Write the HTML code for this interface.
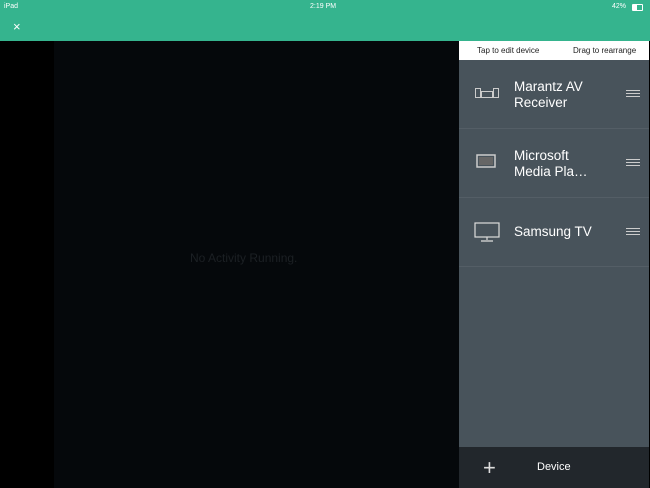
<!DOCTYPE html>
<html><head><style>
body{margin:0;width:650px;height:488px;overflow:hidden;background:#000;font-family:"Liberation Sans",sans-serif;position:relative}
.top{position:absolute;left:0;top:0;width:650px;height:41px;background:#35b48e;color:#fff}
.sb{position:absolute;top:3px;font-size:7px}
.main{position:absolute;left:54px;top:41px;width:405px;height:447px;background:#05080b}
.na{position:absolute;font-size:12px;color:#1c2024}
.panel{position:absolute;left:459px;top:41px;width:190px;height:447px;background:#48535b}
.hdr{height:19px;background:#fff;font-size:8px;color:#222;position:relative}
.row{height:68px;border-bottom:1px solid #545e66;position:relative;color:#fff;font-size:13.5px}
.row .t{position:absolute;left:55px;line-height:16px}
.ham{position:absolute;left:167px;width:14px;height:5px;border-top:1px solid #ccc;border-bottom:1px solid #ccc}
.ham:after{content:"";position:absolute;left:0;right:0;top:2px;border-top:1px solid #ccc}
.foot{position:absolute;left:0;bottom:0;width:190px;height:41px;background:#22272c;color:#fff;font-size:11px}
</style></head><body>
<div class="top">
<div class="sb" style="left:4px">iPad</div>
<div class="sb" style="left:310px">2:19 PM</div>
<div class="sb" style="left:612px">42%</div>
<div style="position:absolute;left:632px;top:4px;width:9px;height:5px;border:1px solid #fff;border-radius:1px"><div style="width:4px;height:5px;background:#fff"></div></div>
<div style="position:absolute;left:13px;top:19px;font-size:13px">×</div>
</div>
<div class="main"><div class="na" style="left:136px;top:210px">No Activity Running.</div></div>
<div class="panel">
<div class="hdr"><span style="position:absolute;left:18px;top:5px">Tap to edit device</span><span style="position:absolute;left:114px;top:5px">Drag to rearrange</span></div>
<div class="row">
<svg style="position:absolute;left:16px;top:27px" width="24" height="12" viewBox="0 0 24 12" fill="none" stroke="#ccc" stroke-width="1"><rect x="0.5" y="1.5" width="5" height="9"/><rect x="6.5" y="4.5" width="11" height="6"/><rect x="18.5" y="1.5" width="5" height="9"/></svg>
<div class="t" style="top:19px">Marantz AV<br>Receiver</div><div class="ham" style="top:30px"></div></div>
<div class="row">
<svg style="position:absolute;left:17px;top:25px" width="20" height="14" viewBox="0 0 20 14"><rect x="1" y="1" width="18" height="12" fill="none" stroke="#ccc" stroke-width="1.5"/><rect x="3" y="3" width="14" height="8" fill="#666"/></svg>
<div class="t" style="top:19px">Microsoft<br>Media Pla…</div><div class="ham" style="top:30px"></div></div>
<div class="row">
<svg style="position:absolute;left:15px;top:24px" width="26" height="20" viewBox="0 0 26 20" fill="none" stroke="#ddd" stroke-width="1.2"><rect x="1" y="1" width="24" height="14"/><path d="M13 15v3M7 19h12"/></svg>
<div class="t" style="top:26px">Samsung TV</div><div class="ham" style="top:30px"></div></div>
<div class="foot"><span style="position:absolute;left:24px;top:8px;font-size:22px;font-weight:100;color:#ddd">+</span><span style="position:absolute;left:78px;top:14px">Device</span></div>
</div>
</body></html>
